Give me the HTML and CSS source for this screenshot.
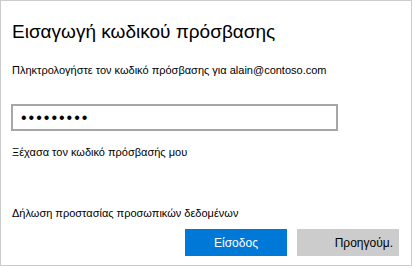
FILE: index.html
```html
<!DOCTYPE html>
<html lang="el">
<head>
    <meta charset="UTF-8">
    <title>Εισαγωγή κωδικού πρόσβασης</title>
    <link rel="stylesheet" href="styles.css">
</head>
<body>
    <div class="dialog">
        <h1 class="title">Εισαγωγή κωδικού πρόσβασης</h1>
        <p class="prompt">Πληκτρολογήστε τον κωδικό πρόσβασης για alain@contoso.com</p>
        <input class="password" type="password" value="123456789">
        <a class="link forgot" href="#">Ξέχασα τον κωδικό πρόσβασής μου</a>
        <a class="link privacy" href="#">Δήλωση προστασίας προσωπικών δεδομένων</a>
        <div class="buttons">
            <button type="button" class="btn btn-primary">Είσοδος</button>
            <button type="button" class="btn btn-back">Προηγούμ.</button>
        </div>
    </div>
</body>
</html>
```

FILE: styles.css
```css
body {
    margin: 0;
    background: #fff;
    font-family: "Liberation Sans", Arial, sans-serif;
    color: #000;
}

.dialog {
    box-sizing: border-box;
    width: 412px;
    height: 266px;
    border: 1px solid #cccccc;
    padding: 0 11px;
    display: flex;
    flex-direction: column;
}

.title {
    margin: 18px 0 0;
    font-size: 19px;
    font-weight: normal;
    line-height: 26px;
}

.prompt {
    margin: 18px 0 0;
    font-size: 11px;
    line-height: 14px;
}

.password {
    box-sizing: border-box;
    width: 327px;
    height: 27px;
    margin: 27px 0 0 -1px;
    padding: 0 8px;
    border: 2px solid #a6a6a6;
    font-size: 16px;
    letter-spacing: 2px;
    outline: none;
}

.link {
    display: block;
    color: #000;
    text-decoration: none;
    font-size: 11px;
    line-height: 14px;
}

.forgot {
    margin-top: 14px;
}

.privacy {
    margin-top: 47px;
}

.buttons {
    display: flex;
    justify-content: flex-end;
    gap: 10px;
    margin: 9px 1px 0 0;
}

.btn {
    width: 102px;
    height: 27px;
    border: none;
    font-family: inherit;
    font-size: 12px;
    padding: 0;
}

.btn-primary {
    background: #0078d7;
    color: #fff;
}

.btn-back {
    background: #cccccc;
    color: #000;
    text-align: right;
    padding-right: 6px;
}
```
